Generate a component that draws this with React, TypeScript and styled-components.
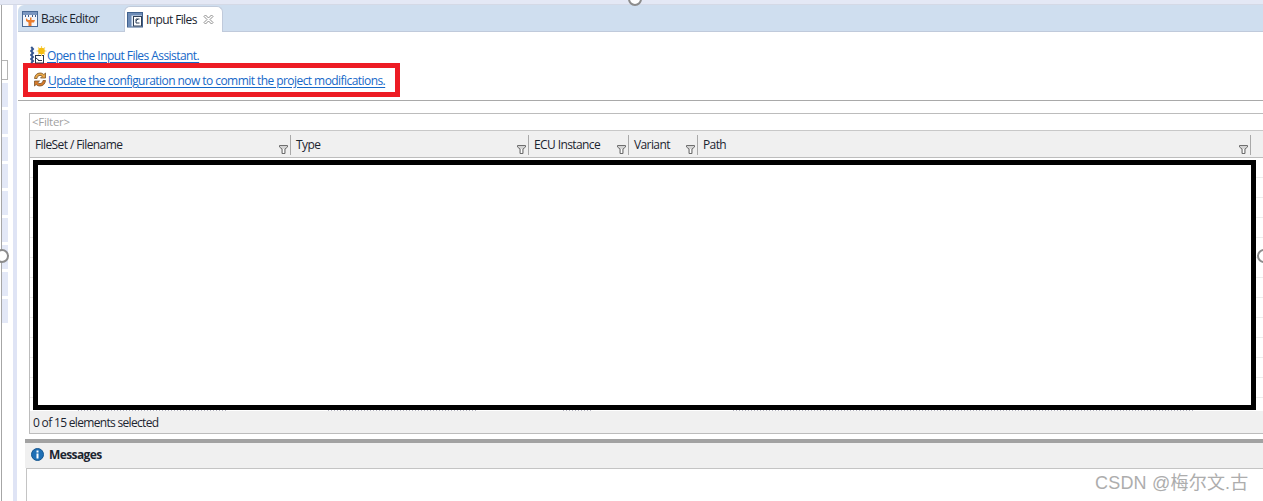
import React from "react";
import styled, { createGlobalStyle } from "styled-components";

const Global = createGlobalStyle`
  html, body { margin: 0; padding: 0; background: #fff; }
  #root { width: 1263px; height: 501px; overflow: hidden; }
`;

const Page = styled.div`
  position: relative;
  width: 1263px;
  height: 501px;
  overflow: hidden;
  display: flex;
  flex-direction: column;
  background: #fff;
  font-family: "Open Sans", "Noto Sans", sans-serif;
  font-size: 12px;
  color: #1c2530;
`;
const TopStrip = styled.div`
  height: 4px;
  flex: none;
  background: #e4e8f5;
  border-bottom: 1px solid #d4d9e6;
`;
const Body = styled.div`
  flex: 1;
  min-height: 0;
  display: flex;
`;
const Rail = styled.div`
  width: 18px;
  flex: none;
  display: flex;
`;
const RailColumn = styled.div`
  width: 7px;
  margin-left: 1px;
  border-left: 1px solid #a6a6a6;
  display: flex;
  flex-direction: column;
  gap: 3px;
  padding-top: 55px;
  box-sizing: border-box;
`;
const RailInput = styled.div`
  height: 20px;
  width: 6px;
  box-sizing: border-box;
  border: 1px solid #b4b4b4;
  border-left: none;
  background: #fff;
`;
const RailBlock = styled.div`
  height: 24px;
  width: 6px;
  background: #e3e8f7;
`;
const RailBar = styled.div`
  width: 4px;
  margin-left: 5px;
  background: #dfe4f5;
`;
const Editor = styled.div`
  flex: 1;
  min-width: 0;
  display: flex;
  flex-direction: column;
`;
const TabBar = styled.div`
  height: 26px;
  flex: none;
  display: flex;
  align-items: flex-end;
  background: #cfdeef;
  border-top-left-radius: 6px;
  border-bottom: 1px solid #c0cadb;
  box-sizing: content-box;
`;
const Tab = styled.div<{ $active?: boolean }>`
  height: ${(p) => (p.$active ? 26 : 25)}px;
  box-sizing: border-box;
  display: flex;
  align-items: center;
  gap: 3px;
  padding: ${(p) => (p.$active ? "0 8px 0 2px" : "0 25px 0 4px")};
  margin-bottom: ${(p) => (p.$active ? "-1px" : "0")};
  background: ${(p) => (p.$active ? "#fff" : "transparent")};
  border: ${(p) => (p.$active ? "1px solid #c0cadb" : "none")};
  border-bottom: none;
  border-radius: 6px 6px 0 0;
  white-space: nowrap;
  letter-spacing: -0.62px;
`;
const CloseSlot = styled.span`
  display: flex;
  margin-left: 3px;
`;
const Form = styled.div`
  flex: none;
  padding: 15px 0 0 5px;
  height: 69px;
  box-sizing: border-box;
  border-bottom: 1px solid #a9a9a9;
`;
const LinkRow = styled.div`
  display: flex;
  align-items: flex-end;
  padding-left: 7px;
  height: 17px;
`;
const Annotated = styled.div`
  width: 377px;
  height: 34px;
  margin-top: -1px;
  box-sizing: border-box;
  border: 5px solid #ed1c24;
  display: flex;
  align-items: center;
  gap: 1px;
  padding: 2px 0 0 5px;
`;
const UpdateSlot = styled.span`
  display: flex;
  margin-top: -3px;
`;
const Link = styled.a`
  color: #1668c8;
  text-decoration: underline;
  text-underline-offset: 2px;
  letter-spacing: -0.56px;
  line-height: 16px;
  white-space: nowrap;
`;
const Gap = styled.div`
  height: 12px;
  flex: none;
`;
const Panel = styled.div`
  flex: none;
  margin-left: 11px;
  height: 321px;
  box-sizing: border-box;
  border: solid #bcbcbc;
  border-width: 1px 0 1px 1px;
  display: flex;
  flex-direction: column;
`;
const Filter = styled.div`
  height: 16px;
  flex: none;
  line-height: 16px;
  padding-left: 2px;
  color: #a2a2a2;
  letter-spacing: -0.3px;
  font-size: 11.5px;
`;
const Header = styled.div`
  height: 26px;
  flex: none;
  display: flex;
  background: #f0f0f0;
  border-top: 1px solid #c8c8c8;
  border-bottom: 1px solid #bdbdbd;
  box-sizing: content-box;
`;
const Col = styled.div<{ $w: number }>`
  width: ${(p) => p.$w}px;
  flex: none;
  position: relative;
  box-sizing: border-box;
  padding: 6px 0 0 5px;
  letter-spacing: -0.6px;
  line-height: 16px;
  &::after {
    content: "";
    position: absolute;
    right: 0;
    top: 4px;
    bottom: 2px;
    width: 1px;
    background: #a9a9a9;
  }
`;
const FilterMark = styled.svg`
  position: absolute;
  right: 3px;
  bottom: 3px;
  width: 9px;
  height: 10px;
`;
const Rows = styled.div`
  flex: 1;
  min-height: 0;
  padding: 2px 6px 0 3px;
  background: repeating-linear-gradient(to bottom, #fff 0, #fff 19px, #ececec 19px, #ececec 20px);
`;
const Redaction = styled.div`
  width: 1223px;
  height: 250px;
  box-sizing: border-box;
  border: 5px solid #000;
  background: #fff;
`;
const Residue = styled.div`
  display: flex;
  height: 1px;
  background: #fff;
`;
const ResidueSegment = styled.span<{ $start: number; $w: number }>`
  margin-left: ${(p) => p.$start}px;
  width: ${(p) => p.$w}px;
  background: repeating-linear-gradient(to right, #b4b4c0 0, #b4b4c0 1px, transparent 1px, transparent 3px);
`;
const Status = styled.div`
  height: 22px;
  flex: none;
  background: #f0f0f0;
  padding-left: 3px;
  line-height: 24px;
  letter-spacing: -0.68px;
`;
const Sash = styled.div`
  flex: none;
  height: 4px;
  margin: 5px 0 0 7px;
  background: #a2a2a2;
`;
const MessagesHead = styled.div`
  flex: none;
  height: 25px;
  box-sizing: border-box;
  margin-left: 7px;
  background: #f0f0f0;
  display: flex;
  align-items: center;
  gap: 5px;
  padding: 0 0 2px 6px;
  font-weight: 700;
  letter-spacing: -0.6px;
`;
const MessagesBody = styled.div`
  flex: 1;
  margin-left: 8px;
  border: solid #c4c4c4;
  border-width: 1px 0 0 1px;
`;
const Handle = styled.div<{ $x: number; $y: number }>`
  position: absolute;
  left: ${(p) => p.$x - 7}px;
  top: ${(p) => p.$y - 7}px;
  width: 14px;
  height: 14px;
  box-sizing: border-box;
  border-radius: 50%;
  background: #fff;
  border: 2.5px solid #8c8c8c;
`;
const Watermark = styled.div`
  position: absolute;
  left: 1095px;
  top: 472px;
  font-family: "Liberation Sans", "Noto Sans CJK SC", sans-serif;
  font-size: 18px;
  line-height: 22px;
  letter-spacing: 0.2px;
  color: #adadad;
  white-space: nowrap;
`;

const Funnel = () => (
  <FilterMark viewBox="0 0 9 10">
    <path d="M.5 1.500h8v1.500L6 5v4.500H3V5L.5 3z" fill="#d4d4d4" stroke="#6e6e6e" strokeWidth="1" />
    <path d="M4 5h1v4H4z" fill="#fff" />
  </FilterMark>
);

const BasicIcon = () => (
  <svg width="16" height="16" viewBox="0 0 16 16">
    <rect x="0.500" y="0.500" width="15" height="15" fill="#f4f6fb" stroke="#4a6a96" />
    <path d="M1 1h14v3H1z" fill="#7b97c0" />
    <path d="M3 4h1v2H3zM6 4h1v2H6zM10 4h1v2h-1zM13 4h1v2h-1z" fill="#3e5d8a" />
    <path d="M4 7l2 2h2V6.500l1.500 0V9H13l-1 2.500H9.500V15h-3v-3.500L4 10z" fill="#ea7d2e" />
  </svg>
);
const FilesIcon = () => (
  <svg width="16" height="17" viewBox="0 0 16 17">
    <rect x="0.500" y="1.500" width="15" height="14.500" fill="#e4ecf6" stroke="#40628f" />
    <path d="M1 2h14v2.500H1zM1 4.500h3.500V16H1z" fill="#6d8cb7" />
    <rect x="6.500" y="5.500" width="8" height="9.500" fill="#fff" stroke="#2f4058" />
    <path d="M12.500 8H9v4h3.500M9 10l2-2" fill="none" stroke="#2f4058" />
  </svg>
);
const CloseIcon = () => (
  <svg width="11" height="11" viewBox="0 0 11 11">
    <path d="M1 2.500 2.500 1l3 3 3-3L10 2.500l-3 3 3 3L8.500 10l-3-3-3 3L1 8.500l3-3z" fill="#fff" stroke="#8e8e8e" />
  </svg>
);
const AssistantIcon = () => (
  <svg width="17" height="18" viewBox="0 0 17 18">
    <path d="M1.200 1l1.800 2-1.800 2 1.800 2-1.800 2 1.800 2-1.800 2 1.800 2-1.800 2" fill="none" stroke="#35568f" strokeWidth="2" />
    <rect x="5.500" y="9.500" width="8" height="7.500" fill="#fff" stroke="#26364e" />
    <path d="M6 12l3 2.500M8 14.500h4" stroke="#26364e" />
    <path d="M11.500 0v10M6.500 5h10M8 1.500l7 7M15 1.500l-7 7" stroke="#f8d765" strokeWidth="1.100" />
    <circle cx="11.500" cy="5" r="3.300" fill="#f5bd12" />
  </svg>
);
const UpdateIcon = () => (
  <svg width="14" height="15" viewBox="0 0 14 15">
    <path d="M1.500 6.500C1.800 3 4.200 1 7 1c1.700 0 2.900.6 3.800 1.600L12.500 1v5H7.500l1.700-1.700C8.700 3.700 8 3.400 7 3.400 5.400 3.400 4.300 4.500 4 6.500z" fill="#eaa849" stroke="#7b5327" strokeWidth=".8" />
    <path d="M12.500 8.500C12.200 12 9.800 14 7 14c-1.700 0-2.900-.6-3.800-1.600L1.500 14V9h5l-1.700 1.700c.5.6 1.200.9 2.200.9 1.600 0 2.700-1.100 3-3.100z" fill="#d77a2b" stroke="#7b5327" strokeWidth=".8" />
  </svg>
);
const InfoIcon = () => (
  <svg width="13" height="13" viewBox="0 0 13 13">
    <circle cx="6.500" cy="6.500" r="6" fill="#1f6fb5" stroke="#15568f" />
    <rect x="5.500" y="5.500" width="2" height="5" fill="#fff" />
    <rect x="5.500" y="2.500" width="2" height="2" fill="#fff" />
  </svg>
);

const columns = [
  { label: "FileSet / Filename", w: 261 },
  { label: "Type", w: 238 },
  { label: "ECU Instance", w: 100 },
  { label: "Variant", w: 69 },
  { label: "Path", w: 553 },
];

const residue = [
  { start: 45, w: 150 },
  { start: 100, w: 150 },
  { start: 85, w: 30 },
  { start: 140, w: 460 },
];

export default function App() {
  return (
    <Page>
      <Global />
      <TopStrip />
      <Body>
        <Rail>
          <RailColumn>
            <RailInput />
            {Array.from({ length: 9 }, (_, i) => (
              <RailBlock key={i} />
            ))}
          </RailColumn>
          <RailBar />
        </Rail>
        <Editor>
          <TabBar>
            <Tab>
              <BasicIcon />
              Basic Editor
            </Tab>
            <Tab $active>
              <FilesIcon />
              Input Files
              <CloseSlot>
                <CloseIcon />
              </CloseSlot>
            </Tab>
          </TabBar>
          <Form>
            <LinkRow>
              <AssistantIcon />
              <Link>Open the Input Files Assistant.</Link>
            </LinkRow>
            <Annotated>
              <UpdateSlot>
                <UpdateIcon />
              </UpdateSlot>
              <Link>Update the configuration now to commit the project modifications.</Link>
            </Annotated>
          </Form>
          <Gap />
          <Panel>
            <Filter>&lt;Filter&gt;</Filter>
            <Header>
              {columns.map((c) => (
                <Col key={c.label} $w={c.w}>
                  {c.label}
                  <Funnel />
                </Col>
              ))}
            </Header>
            <Rows>
              <Redaction />
              <Residue>
                {residue.map((r) => (
                  <ResidueSegment key={r.start} $start={r.start} $w={r.w} />
                ))}
              </Residue>
            </Rows>
            <Status>0 of 15 elements selected</Status>
          </Panel>
          <Sash />
          <MessagesHead>
            <InfoIcon />
            Messages
          </MessagesHead>
          <MessagesBody />
        </Editor>
      </Body>
      <Handle $x={635} $y={-1} />
      <Handle $x={2} $y={256} />
      <Handle $x={1264} $y={256} />
      <Watermark>CSDN @梅尔文.古</Watermark>
    </Page>
  );
}
